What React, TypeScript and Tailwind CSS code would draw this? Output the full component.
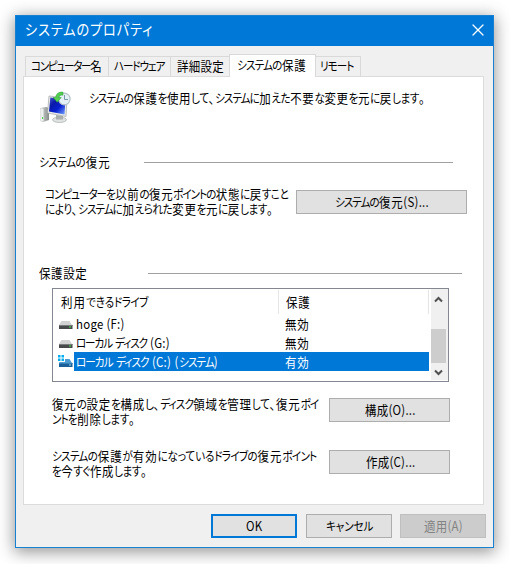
import { X } from "lucide-react";
import { clsx } from "clsx";

const kanaClass = (part: string) => {
  if (/^[\u30a0-\u30ff]/.test(part)) return "text-[12px] tracking-[-1.6px]";
  if (/^[\u3040-\u309f]/.test(part)) return "text-[12px] tracking-[-1px]";
  return "";
};

// kana are set narrower than kanji, like in the Windows UI fonts
const Label = ({ text, className }: { text: string; className?: string }) => (
  <div className={clsx("-translate-y-px", className)}>
    <div className="w-[113.6%] origin-left scale-x-88 text-[13px] tracking-[0.3px] whitespace-nowrap [font-feature-settings:'palt'] [text-align-last:justify]">
      {text.split(/([\u3040-\u309f]+|[\u30a0-\u30ff]+)/).map((part, i) => (
        <span key={i} className={kanaClass(part)}>
          {part}
        </span>
      ))}
    </div>
  </div>
);

const Button = ({
  text,
  className,
  labelClass,
}: {
  text: string;
  className?: string;
  labelClass: string;
}) => (
  <button
    className={clsx(
      "flex h-6 shrink-0 items-center justify-center border",
      className
    )}
  >
    <Label text={text} className={labelClass} />
  </button>
);

const tabs = [
  { text: "コンピューター名", box: "w-[83px] pl-[5px]", label: "w-[71px]" },
  { text: "ハードウェア", box: "w-[62px] pl-[5px]", label: "w-[50px]" },
  { text: "詳細設定", box: "w-[59px] pl-[6px]", label: "w-[47px]" },
  { text: "システムの保護", active: true, box: "w-[87px] pl-[7px]", label: "w-[69px]" },
  { text: "リモート", box: "w-[44px] pl-[4px]", label: "w-[33px]" },
];

const drives = [
  { name: "hoge (F:)", status: "無効", label: "w-[47px]" },
  { name: "ローカル ディスク (G:)", status: "無効", label: "w-[94px]" },
  { name: "ローカル ディスク (C:) (システム)", status: "有効", label: "w-[142px]", system: true },
];

const DriveIcon = ({ system }: { system?: boolean }) => (
  <svg width="17" height="19" viewBox="0 0 17 19" className="shrink-0">
    <path d="M4.500 7h8l2.500 4H2z" fill={system ? "#4d9ad0" : "#d2d2d2"} />
    <path d="M2 11h13.500v4H2z" fill={system ? "#1c5f98" : "#48494b"} />
    <path d="M2 11.500h13.500" stroke={system ? "#3481b9" : "#77797b"} />
    <path d="M12 12.500h2v1h-2z" fill={system ? "#9be2f0" : "#45ef52"} />
    {system && (
      <>
        <path d="M0 2h8v8H0z" fill="#fff" />
        <path d="M1 3h2.500v2.500H1zM4.500 3H7v2.500H4.500zM1 6.500h2.500V9H1zM4.500 6.500H7V9H4.500z" fill="#00adef" />
      </>
    )}
  </svg>
);

const RestoreIcon = () => (
  <svg width="32" height="34" viewBox="0 0 32 34" className="shrink-0">
    <defs>
      <linearGradient id="screen" x1="0" y1="0" x2="1" y2="1">
        <stop offset="0" stopColor="#4a5fd0" />
        <stop offset="0.3" stopColor="#0a18a8" />
        <stop offset="0.6" stopColor="#0820d0" />
        <stop offset="1" stopColor="#7dabff" />
      </linearGradient>
      <linearGradient id="tower" x1="0" y1="0" x2="1" y2="0">
        <stop offset="0" stopColor="#d8dcda" />
        <stop offset="1" stopColor="#858d8a" />
      </linearGradient>
    </defs>
    <path d="M1 17l6-1 3 1v12l-6 2-3-1z" fill="url(#tower)" />
    <path d="M1.500 17.500l3 .3v12.500l-3-.5z" fill="#edf0ee" />
    <path d="M3 26h1v2H3z" fill="#49d94c" />
    <ellipse cx="20.500" cy="28.800" rx="7" ry="2.700" fill="#dfe3e1" stroke="#a6adaa" strokeWidth="0.700" />
    <path d="M17 24l7 1v3.500h-7z" fill="#aab0ae" />
    <path d="M10 5l18 2-1 18.500-18.500-3.500z" fill="#e9eceb" stroke="#a0a6a4" strokeWidth="0.700" />
    <path d="M11.300 6.500l15.200 2-1 15-15.500-3z" fill="url(#screen)" />
    <circle cx="25.300" cy="8" r="5.800" fill="#e5f1f7" stroke="#b5c2c9" strokeWidth="1.200" />
    <path d="M25.500 4v4.500h3.500" fill="none" stroke="#7895a5" />
    <path d="M24 1.200c-4.500-.7-7 2-7.300 5.300h-2.500l4 4.800 4-4.800h-2.500c.2-1.800 1.800-2.700 4.300-2.300z" fill="#55cf50" stroke="#239832" strokeWidth="0.500" />
  </svg>
);

const Chevron = ({ down }: { down?: boolean }) => (
  <svg width="9" height="7" viewBox="0 0 9 7" className={down ? "mt-[6px] rotate-180" : ""}>
    <path d="M1 5.500l3.500-3.500L8 5.500" fill="none" stroke="#505050" strokeWidth="2" />
  </svg>
);

const plain = "border-[#adadad] bg-[#e1e1e1]";

export default function App() {
  return (
    <div className="h-[564px] w-[510px] overflow-hidden bg-white pt-[15px] pl-[15px] font-['Noto_Sans_CJK_JP',sans-serif] text-[12px] leading-[15px] text-black">
      <div className="flex h-[533px] w-[479px] flex-col border border-[#1880d0] bg-[#f0f0f0] shadow-[0_3px_15px_1px_rgba(0,0,0,0.42)]">
        <div className="flex h-[30px] shrink-0 items-center justify-between bg-[#0078d7] pr-[5px] pb-[2px] pl-[9px] text-white">
          <Label
            text="システムのプロパティ"
            className="w-[127px] [&_span]:text-[15px] [&_span]:tracking-[-0.4px]"
          />
          <X size={20} strokeWidth={1.5} />
        </div>

        <div className="mt-[8px] flex h-[22px] shrink-0 items-end pl-[9px]">
          {tabs.map((tab) => (
            <div
              key={tab.text}
              className={clsx(
                "flex shrink-0 items-center border-t border-l border-[#d9d9d9]",
                tab.box,
                tab.active
                  ? "relative -mb-px h-[23px] border-r bg-white pb-[2px]"
                  : "h-[20px]",
                tab.text === "リモート" && "w-[45px] border-r border-l-0"
              )}
            >
              <Label text={tab.text} className={tab.label} />
            </div>
          ))}
        </div>

        <div className="ml-[7px] flex h-[429px] w-[461px] shrink-0 flex-col border border-[#dcdcdc] bg-white">
          <div className="flex h-[47px] pt-[14px] pl-[15px]">
            <RestoreIcon />
            <Label
              text="システムの保護を使用して、システムに加えた不要な変更を元に戻します。"
              className="ml-[18px] w-[336px]"
            />
          </div>

          <div className="mt-[30px] flex h-4 items-center pl-[15px]">
            <Label text="システムの復元" className="w-[71px]" />
            <div className="ml-[34px] h-px w-[309px] bg-[#a0a0a0]" />
          </div>
          <div className="mt-[17px] flex h-[30px] pl-[21px]">
            <div className="w-[251px]">
              <Label text="コンピューターを以前の復元ポイントの状態に戻すこと" className="w-[243px]" />
              <Label text="により、システムに加えられた変更を元に戻します。" className="w-[228px]" />
            </div>
            <Button text="システムの復元(S)..." className={clsx(plain, "mt-[3px] w-[171px]")} labelClass="w-[94px]" />
          </div>

          <div className="mt-[48px] flex h-4 items-center pl-[15px]">
            <Label text="保護設定" className="w-[48px]" />
            <div className="ml-[61px] h-px w-[314px] bg-[#a0a0a0]" />
          </div>

          <div className="mt-[7px] ml-[28px] flex h-[94px] w-[397px] shrink-0 border border-[#828790] pb-px">
            <div className="flex flex-1 flex-col pt-px">
              <div className="flex h-6">
                <div className="flex w-[226px] items-center border-r border-[#e5e5e5] pl-[8px]">
                  <Label text="利用できるドライブ" className="w-[86px]" />
                </div>
                <div className="flex w-[150px] items-center border-r border-[#e5e5e5] pl-[7px]">
                  <Label text="保護" className="w-[24px]" />
                </div>
              </div>
              {drives.map((drive) => (
                <div key={drive.name} className="flex h-[19px] pl-[4px]">
                  <DriveIcon system={drive.system} />
                  <div
                    className={clsx(
                      "flex w-[355px] items-center pt-px pl-[2px]",
                      drive.system && "bg-[#0078d7] text-white"
                    )}
                  >
                    <div className="w-[209px]">
                      <Label text={drive.name} className={drive.label} />
                    </div>
                    <Label text={drive.status} className="w-[24px]" />
                  </div>
                </div>
              ))}
            </div>
            <div className="flex w-[17px] flex-col items-center bg-[#f0f0f0] pt-[7px] pr-[2px]">
              <Chevron />
              <div className="mt-[26px] h-[34px] w-[15px] shrink-0 bg-[#cdcdcd]" />
              <Chevron down />
            </div>
          </div>

          <div className="mt-[15px] flex h-[30px] pl-[28px]">
            <div className="w-[277px]">
              <Label text="復元の設定を構成し、ディスク領域を管理して、復元ポイ" className="w-[266px]" />
              <Label text="ントを削除します。" className="w-[83px]" />
            </div>
            <Button text="構成(O)..." className={clsx(plain, "mt-px w-[121px]")} labelClass="w-[49px]" />
          </div>
          <div className="mt-[22px] flex h-[30px] pl-[28px]">
            <div className="w-[277px]">
              <Label text="システムの保護が有効になっているドライブの復元ポイント" className="w-[264px]" />
              <Label text="を今すぐ作成します。" className="w-[95px]" />
            </div>
            <Button text="作成(C)..." className={clsx(plain, "mt-px w-[121px]")} labelClass="w-[47px]" />
          </div>
        </div>

        <div className="mt-[9px] flex pl-[195px]">
          <Button text="OK" className="w-[86px] border-2 border-[#0078d7] bg-[#e1e1e1]" labelClass="w-[17px]" />
          <Button text="キャンセル" className={clsx(plain, "ml-[9px] w-[86px]")} labelClass="w-[46px]" />
          <Button
            text="適用(A)"
            className="ml-[8px] w-[86px] border-[#bfbfbf] bg-[#cccccc] text-[#838383]"
            labelClass="w-[39px]"
          />
        </div>
      </div>
    </div>
  );
}
